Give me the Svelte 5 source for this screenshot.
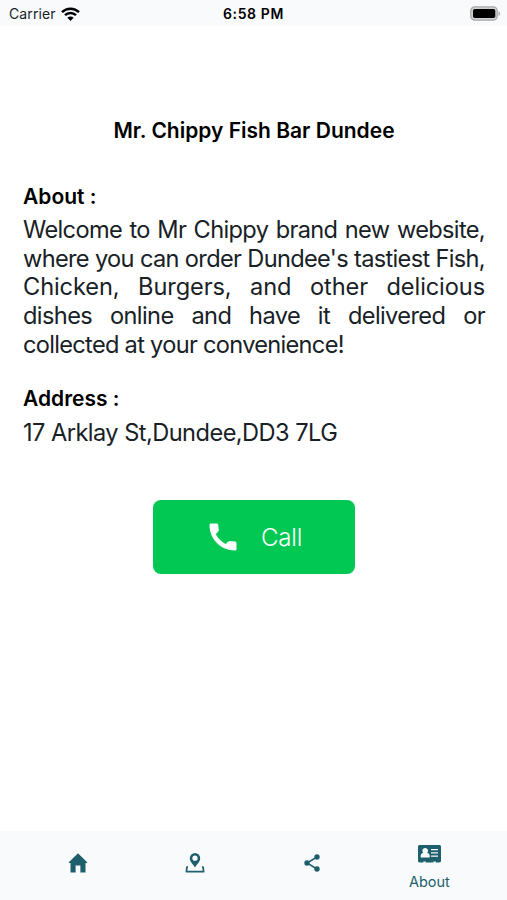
<script>
  const shop = {
    name: "Mr. Chippy Fish Bar Dundee",
    about: [
      { text: "Welcome to Mr Chippy brand new website,", tracking: -0.65 },
      { text: "where you can order Dundee's tastiest Fish,", tracking: -0.68 },
      { text: "Chicken, Burgers, and other delicious", tracking: -0.1 },
      { text: "dishes online and have it delivered or", tracking: -0.6 },
      { text: "collected at your convenience!", tracking: -0.7 },
    ],
    address: "17 Arklay St,Dundee,DD3 7LG",
  };

  const tabs = ["Home", "Location", "Share", "About"];
  let active = "About";
</script>

<div class="screen">
  <header class="status">
    <div class="carrier">
      <span>Carrier</span>
      <svg width="19" height="14" viewBox="0 0 19 14">
        <path d="M1 5.1a12.2 12.2 0 0 1 17 0" />
        <path d="M4 8.2a7.8 7.8 0 0 1 11 0" />
        <path class="dot" d="M9.5 14 6.4 10.8a4.4 4.4 0 0 1 6.2 0z" />
      </svg>
    </div>
    <span class="time">6:58 PM</span>
    <svg class="battery" width="31" height="15" viewBox="0 0 31 15">
      <rect x="0.8" y="0.8" width="26.4" height="13.4" rx="4" fill="#d0d1d2" stroke="#a9aaab" stroke-width="1.3" />
      <rect x="3" y="3" width="22.3" height="9" rx="1.8" fill="#000" />
      <path d="M28.5 5.2c2.2.8 2.2 3.8 0 4.6z" fill="#a9aaab" />
    </svg>
  </header>

  <main>
    <h1>{shop.name}</h1>

    <section>
      <h2>About :</h2>
      <p class="about">
        {#each shop.about as line}
          <span class="line" style="letter-spacing: {line.tracking}px">{line.text}</span>
        {/each}
      </p>
    </section>

    <section class="address">
      <h2>Address :</h2>
      <p>{shop.address}</p>
    </section>

    <button class="call" type="button">
      <svg width="36" height="36" viewBox="0 0 24 24">
        <path
          d="M4 3h3.8c.5 0 .9.4 1 .9l.4 3.3c0 .4-.1.8-.4 1.1L7.2 10.2c1.4 2.8 3.6 5 6.5 6.5l1.9-1.7c.3-.3.7-.4 1.1-.4l3.4.4c.5.1.9.5.9 1V20c0 .6-.4 1-1 1C10.6 21 3 13.4 3 4c0-.6.4-1 1-1z"
        />
      </svg>
      <span>Call</span>
    </button>
  </main>

  <nav>
    {#each tabs as tab}
      <button
        class="tab"
        class:active={tab === active}
        type="button"
        aria-label={tab}
        on:click={() => (active = tab)}
      >
        {#if tab === "Home"}
          <svg width="20" height="20" viewBox="0 0 20 20">
            <path d="M10 .2 19.2 9.3v.8h-1.7v9.4h-5.1v-6.9H7.6v6.9H2.5v-9.4H.8v-.8z" />
          </svg>
        {:else if tab === "Location"}
          <svg width="20" height="20" viewBox="0 0 20 20">
            <path
              fill-rule="evenodd"
              d="M10 0a5.2 5.2 0 0 1 5.2 5.2c0 3.4-3.2 5.9-5.2 9.2-2-3.3-5.2-5.8-5.2-9.2A5.2 5.2 0 0 1 10 0zm0 2.6a2.6 2.6 0 1 0 0 5.2 2.6 2.6 0 0 0 0-5.2z"
            />
            <path class="tray" d="M3 14H1.9l-.5 4.7h17.2l-.5-4.7H17" />
          </svg>
        {:else if tab === "Share"}
          <svg width="20" height="20" viewBox="0 0 20 20">
            <path class="link" d="M15 4 5 10l10 6" />
            <circle cx="15" cy="4" r="2.7" />
            <circle cx="5" cy="10" r="2.7" />
            <circle cx="15" cy="16" r="2.7" />
          </svg>
        {:else}
          <svg width="23" height="18" viewBox="0 0 23 18">
            <path
              d="M1.7 0h19.6C22.3 0 23 .7 23 1.7v14.1c0 .9-.7 1.7-1.7 1.7h-3.5v-1.1h-2.4v1.1H7.7v-1.1H5.3v1.1H1.7C.7 17.5 0 16.7 0 15.8V1.7C0 .7.7 0 1.7 0z"
            />
            <path
              class="cut"
              d="M7.2 2.9a2.8 2.8 0 0 1 2 4.8c1.7.4 2.5 1.6 2.5 3.2v1.6h-9v-1.6c0-1.6.9-2.8 2.5-3.2a2.8 2.8 0 0 1 2-4.8zM13 3.9h7v1.3h-7zM13 7.2h7v1.3h-7zM13 10.5h7v1.3h-7z"
            />
          </svg>
        {/if}
        {#if tab === active}
          <span>{tab}</span>
        {/if}
      </button>
    {/each}
  </nav>
</div>

<style>
  :global(body) {
    margin: 0;
  }

  .screen {
    display: flex;
    flex-direction: column;
    height: 900px;
    background: #fff;
    font-family: Inter, "Liberation Sans", sans-serif;
    color: #172126;
  }

  .status {
    display: grid;
    grid-template-columns: 1fr auto 1fr;
    align-items: center;
    box-sizing: border-box;
    height: 26px;
    padding: 1px 6px 0 9px;
    background: #f8fafc;
    font-size: 14px;
  }

  .carrier {
    display: flex;
    align-items: center;
    gap: 5px;
    letter-spacing: 0.1px;
  }

  .carrier path {
    fill: none;
    stroke: #000;
    stroke-width: 2.5;
  }

  .carrier .dot {
    fill: #000;
    stroke: none;
  }

  .time {
    margin-right: 3px;
    font-weight: 600;
    letter-spacing: 0.6px;
    color: #000;
  }

  .battery {
    justify-self: end;
  }

  main {
    flex: 1;
    display: flex;
    flex-direction: column;
    padding: 90px 22px 0 23px;
  }

  h1,
  h2,
  p {
    margin: 0;
  }

  h1,
  h2 {
    font-size: 21px;
    line-height: 30px;
    font-weight: 600;
    color: #000;
  }

  h1 {
    text-align: center;
    margin-bottom: 36px;
  }

  p {
    margin-top: 4px;
    font-size: 23.6px;
    line-height: 28.7px;
    letter-spacing: -0.54px;
    white-space: nowrap;
  }

  .line {
    display: block;
    text-align-last: justify;
  }

  .line:last-child {
    text-align-last: left;
  }

  .address {
    margin-top: 24px;
  }

  .address p {
    margin-top: 5px;
  }

  button {
    border: 0;
    font-family: inherit;
    cursor: pointer;
  }

  .call {
    display: flex;
    align-items: center;
    align-self: center;
    width: 202px;
    height: 74px;
    margin-top: 53px;
    padding: 0 0 0 52px;
    gap: 20px;
    border-radius: 8px;
    background: #00c853;
    color: #fff;
    font-size: 24px;
    font-weight: 300;
    letter-spacing: -0.2px;
  }

  .call svg {
    fill: #fff;
  }

  nav {
    display: grid;
    grid-template-columns: repeat(4, 1fr);
    box-sizing: border-box;
    height: 69px;
    padding: 0 19px 5px;
    background: #f8fafc;
  }

  .tab {
    display: flex;
    flex-direction: column;
    align-items: center;
    justify-content: center;
    gap: 10px;
    padding: 0;
    background: none;
    color: #1d5f6b;
    font-size: 14.5px;
    line-height: 18px;
  }

  .tab.active {
    padding-top: 10px;
  }

  .tab svg {
    fill: #1d5f6b;
  }

  .tab .tray {
    fill: none;
    stroke: #1d5f6b;
    stroke-width: 1.7;
    stroke-linejoin: round;
  }

  .tab .link {
    fill: none;
    stroke: #1d5f6b;
    stroke-width: 1.5;
  }

  .tab .cut {
    fill: #f8fafc;
  }
</style>
